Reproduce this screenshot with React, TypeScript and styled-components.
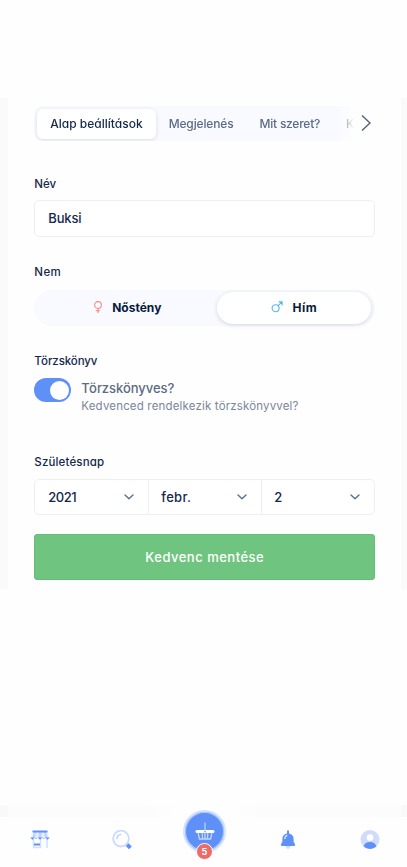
import React from "react";
import styled, { createGlobalStyle } from "styled-components";

const navy = "#14284b";
const slate = "#5d6b84";
const blue = "#5e90f7";

const GlobalStyle = createGlobalStyle`
  * { box-sizing: border-box; }
  body { margin: 0; background: #fff; }
  button, input { font: inherit; color: inherit; letter-spacing: inherit; }
`;

const Screen = styled.div`
  display: flex;
  flex-direction: column;
  width: 407px;
  height: 867px;
  padding-top: 98px;
  overflow: hidden;
  background: #fefefe;
  color: ${navy};
  font-family: Inter, "Liberation Sans", sans-serif;
  font-feature-settings: "cv11";
  font-weight: 500;
`;

const Backdrop = styled.main`
  height: 491px;
  padding: 0 6px 0 8px;
  background: #fafafa;
`;

const Card = styled.form`
  display: flex;
  flex-direction: column;
  height: 100%;
  padding: 8px 26px 0 26.3px;
  background: #fefefe;
`;

const TabBar = styled.div`
  display: flex;
  align-items: center;
  flex: none;
  height: 35px;
  margin-right: -4px;
`;

const TabTrack = styled.div`
  display: flex;
  align-items: center;
  width: 320px;
  height: 35px;
  padding-left: 3px;
  overflow: hidden;
  border-radius: 8px 0 0 8px;
  background: #f9faff;
  -webkit-mask-image: linear-gradient(90deg, #000 304px, transparent 320px);
  mask-image: linear-gradient(90deg, #000 304px, transparent 320px);
`;

const Tab = styled.button<{ $active?: boolean; $spacing?: number }>`
  flex: none;
  height: 30px;
  padding: 0 13px;
  border: 0;
  border-radius: 6px;
  background: ${(p) => (p.$active ? "#fff" : "transparent")};
  box-shadow: ${(p) => (p.$active ? "0 1px 4px rgba(30, 50, 90, 0.15)" : "none")};
  color: ${(p) => (p.$active ? navy : slate)};
  font-size: 12px;
  line-height: 29px;
  letter-spacing: ${(p) => p.$spacing ?? 0}px;
  white-space: nowrap;
  &:last-child { padding-right: 0; }
`;

const NextButton = styled.button`
  display: flex;
  padding: 0;
  margin: -1px 0 0 6px;
  border: 0;
  background: none;
`;

const Label = styled.label<{ $gap: number; $spacing?: number }>`
  margin-top: ${(p) => p.$gap}px;
  font-size: 11.5px;
  line-height: 16px;
  letter-spacing: ${(p) => p.$spacing ?? 0}px;
`;

const TextInput = styled.input`
  width: 341px;
  height: 37px;
  margin-top: 8px;
  padding: 0 13px 2px;
  border: 1.5px solid #eeeff3;
  border-radius: 5px;
  outline: 0;
  background: #fff;
  font-size: 13px;
  letter-spacing: -0.15px;
`;

const GenderSwitch = styled.div`
  display: flex;
  align-items: center;
  width: 341px;
  height: 36px;
  margin-top: 10px;
  padding: 0 3px 1px;
  border-radius: 18px;
  background: #f9faff;
`;

const GenderOption = styled.button<{ $active?: boolean; $spacing: number }>`
  display: flex;
  align-items: center;
  justify-content: center;
  gap: 9px;
  width: ${(p) => (p.$active ? 154 : 180)}px;
  height: 32px;
  padding: 0 0 1px;
  border: 0;
  border-radius: 16px;
  background: ${(p) => (p.$active ? "#fff" : "transparent")};
  box-shadow: ${(p) => (p.$active ? "0 1px 4px rgba(30, 50, 90, 0.18)" : "none")};
  color: #071b3d;
  font-size: 12px;
  font-weight: 700;
  letter-spacing: ${(p) => p.$spacing}px;
`;

const PedigreeRow = styled.div`
  display: flex;
  gap: 10px;
  height: 39px;
  margin-top: 9px;
`;

const Toggle = styled.button`
  display: flex;
  justify-content: flex-end;
  align-items: center;
  width: 37px;
  height: 24px;
  padding: 2px;
  border: 0;
  border-radius: 12px;
  background: ${blue};
`;

const ToggleKnob = styled.span`
  width: 19px;
  height: 19px;
  border-radius: 50%;
  background: #fff;
`;

const PedigreeText = styled.div`
  color: ${slate};
`;

const PedigreeTitle = styled.div`
  font-size: 13px;
  line-height: 20px;
  letter-spacing: -0.05px;
`;

const PedigreeHint = styled.div`
  color: #7a869b;
  font-size: 11.5px;
  font-weight: 400;
  line-height: 16px;
  letter-spacing: 0.17px;
`;

const DateGroup = styled.div`
  display: grid;
  grid-template-columns: repeat(3, 1fr);
  width: 341px;
  height: 36px;
  margin-top: 9px;
  border: 1.5px solid #eeeff3;
  border-radius: 5px;
  background: #fff;
`;

const DateSelect = styled.div<{ $spacing?: number }>`
  display: flex;
  align-items: center;
  justify-content: space-between;
  padding: 0 14.5px 1px 13px;
  font-size: 13px;
  letter-spacing: ${(p) => p.$spacing ?? 0}px;
  & + & { border-left: 1.5px solid #eeeff3; padding-left: 12px; }
`;

const SaveButton = styled.button`
  flex: none;
  width: 341px;
  height: 46px;
  margin-top: 19px;
  border: 0;
  border-radius: 4px;
  background: #6fc57f;
  box-shadow: inset 0 0 0 1px #66bd77;
  color: #fff;
  font-size: 13px;
  letter-spacing: 0.5px;
`;

const BottomNav = styled.nav`
  display: flex;
  flex-direction: column;
  height: 62px;
  margin-top: auto;
`;

const NavEdge = styled.div`
  flex: none;
  height: 12px;
  border: solid #f9f9f9;
  border-width: 0 6px 0 8px;
  background: linear-gradient(90deg, #fcfcfc 35%, #fefefe 44%, #fefefe 56%, #fcfcfc 65%);
`;

const NavItems = styled.div`
  display: grid;
  grid-template-columns: 79px 86px 79px 87px 77px;
  height: 50px;
`;

const NavItem = styled.a`
  display: flex;
  justify-content: center;
  padding-top: 13px;
`;

const BasketButton = styled.a`
  display: flex;
  flex-direction: column;
  align-items: center;
  margin-top: -7px;
`;

const BasketDisc = styled.span`
  display: flex;
  align-items: center;
  justify-content: center;
  flex: none;
  width: 43px;
  height: 43px;
  border: 2px solid #d3e2fd;
  border-radius: 50%;
  background: ${blue};
  box-shadow: inset 0 0 0 1px #a9c6fc;
`;

const BasketCount = styled.span`
  display: flex;
  align-items: center;
  justify-content: center;
  flex: none;
  width: 17px;
  height: 17px;
  margin-top: -10px;
  border: 1.5px solid #fff;
  border-radius: 50%;
  background: #ec6a68;
  color: #fff;
  font-size: 9px;
  font-weight: 700;
`;

const FemaleIcon = () => (
  <svg width="10" height="12" viewBox="0 0 10 12" fill="none" stroke="#f28b82" strokeWidth="1.1">
    <circle cx="5" cy="4" r="3.4" />
    <path d="M5 7.4V12M2.8 9.8h4.4" />
  </svg>
);

const MaleIcon = () => (
  <svg width="12" height="12" viewBox="0 0 12 12" fill="none" stroke="#55b5f3" strokeWidth="1.1">
    <circle cx="4.6" cy="7.2" r="3.5" />
    <path d="M7.1 4.7L11 1M7.7.9h3.4v3.5" />
  </svg>
);

const SelectArrow = () => (
  <svg width="10" height="6" viewBox="0 0 10 6" fill="none" stroke="#5a6f92" strokeWidth="1.4" strokeLinecap="round" strokeLinejoin="round">
    <path d="M1 1l4 3.8L9 1" />
  </svg>
);

const StoreIcon = () => (
  <svg width="20" height="19" viewBox="0 0 20 19" fill="none">
    <path d="M3 2L1 8h18l-2-6z" fill="#e6eeff" />
    <path d="M4 2h2L5 8H2.500zM9 2h2.500v6H8.500zM14 2h2l1.500 6H15z" fill="#bdd3ff" />
    <path d="M3.500 9v8.500h7V9M17 9v9" stroke="#cfdfff" strokeWidth="1.500" />
    <path d="M2.500 1.500h15M4 14.500h6" stroke={blue} strokeWidth="2" />
    <path d="M.2 7.500h4.600l-2.300 2.300zM7.700 7.500h4.600l-2.300 2.300zM15.200 7.500h4.600l-2.300 2.300z" fill={blue} />
    <path d="M5.200 8.300h2.200M12.500 8.300h2.200" stroke="#9dbdfd" />
  </svg>
);

const SearchIcon = () => (
  <svg width="20" height="20" viewBox="0 0 20 20" fill="none">
    <circle cx="9" cy="8.600" r="7.900" stroke="#c9dcff" strokeWidth="1.800" />
    <path d="M5 8.700a4 4 0 0 1 3.600-4" stroke="#b4cdff" strokeWidth="1.300" strokeLinecap="round" />
    <path d="M15.200 14.600l3.200 3.200" stroke={blue} strokeWidth="4" />
  </svg>
);

const BasketIcon = () => (
  <svg width="20" height="19" viewBox="0 0 20 19" fill="none">
    <path d="M10 1v8" stroke="#a9c7ff" strokeWidth="1.500" strokeLinecap="round" />
    <path d="M3.200 11l1.200 6h11.200l1.200-6M7.200 11l.4 6M10 11v6M12.800 11l-.4 6" stroke="#c2d7ff" strokeWidth="1.300" />
    <rect x=".5" y="8" width="19" height="3" rx="1.500" fill="#fff" />
    <circle cx="10" cy="9.500" r="1" fill="#8eb3fa" />
  </svg>
);

const BellIcon = () => (
  <svg width="16" height="20" viewBox="0 0 16 20">
    <circle cx="8" cy="16.500" r="2.400" fill="#cfe0ff" />
    <path d="M7 1.200a1 1 0 0 1 2 0V3.500c3.200.6 4.600 2.800 4.600 5.500v3l1.400 2c.3.800.1 2-1 2H2c-1.100 0-1.300-1.200-1-2l1.400-2V9C2.400 6.300 3.800 4.100 7 3.500z" fill={blue} />
    <path d="M4.900 8.500c0-1.700.8-2.700 2-3.200" fill="none" stroke="#e2ecff" strokeWidth="1.300" strokeLinecap="round" />
  </svg>
);

const ProfileIcon = () => (
  <svg width="20" height="20" viewBox="0 0 20 20">
    <circle cx="10" cy="9.500" r="9.500" fill="#cfddfb" />
    <circle cx="10" cy="7.500" r="3.300" fill="#fff" />
    <path d="M3.600 16.500C4.400 13.500 6.800 12.100 10 12.100s5.600 1.400 6.400 4.400a9.500 9.500 0 0 1-12.800 0z" fill={blue} />
  </svg>
);

export default function App() {
  return (
    <>
      <GlobalStyle />
      <Screen>
        <Backdrop>
          <Card>
            <TabBar>
              <TabTrack>
                <Tab type="button" $active>Alap beállítások</Tab>
                <Tab type="button" $spacing={-0.14}>Megjelenés</Tab>
                <Tab type="button" $spacing={-0.24}>Mit szeret?</Tab>
                <Tab type="button">Ke</Tab>
              </TabTrack>
              <NextButton type="button" aria-label="Következő">
                <svg width="12" height="18" viewBox="0 0 12 18" fill="none" stroke="#50617e" strokeWidth="1.4">
                  <path d="M2 1.500L10 9l-8 7.500" />
                </svg>
              </NextButton>
            </TabBar>

            <Label $gap={35}>Név</Label>
            <TextInput defaultValue="Buksi" />

            <Label $gap={27} $spacing={0.4}>Nem</Label>
            <GenderSwitch>
              <GenderOption type="button" $spacing={0}><FemaleIcon />Nőstény</GenderOption>
              <GenderOption type="button" $active $spacing={0.5}><MaleIcon />Hím</GenderOption>
            </GenderSwitch>

            <Label $gap={27} $spacing={-0.1}>Törzskönyv</Label>
            <PedigreeRow>
              <Toggle type="button" role="switch" aria-checked="true"><ToggleKnob /></Toggle>
              <PedigreeText>
                <PedigreeTitle>Törzskönyves?</PedigreeTitle>
                <PedigreeHint>Kedvenced rendelkezik törzskönyvvel?</PedigreeHint>
              </PedigreeText>
            </PedigreeRow>

            <Label $gap={37} $spacing={0.15}>Születésnap</Label>
            <DateGroup>
              <DateSelect $spacing={-0.45}>2021<SelectArrow /></DateSelect>
              <DateSelect $spacing={0.3}>febr.<SelectArrow /></DateSelect>
              <DateSelect>2<SelectArrow /></DateSelect>
            </DateGroup>

            <SaveButton type="button">Kedvenc mentése</SaveButton>
          </Card>
        </Backdrop>

        <BottomNav>
          <NavEdge />
          <NavItems>
            <NavItem><StoreIcon /></NavItem>
            <NavItem><SearchIcon /></NavItem>
            <BasketButton>
              <BasketDisc><BasketIcon /></BasketDisc>
              <BasketCount>5</BasketCount>
            </BasketButton>
            <NavItem><BellIcon /></NavItem>
            <NavItem><ProfileIcon /></NavItem>
          </NavItems>
        </BottomNav>
      </Screen>
    </>
  );
}
